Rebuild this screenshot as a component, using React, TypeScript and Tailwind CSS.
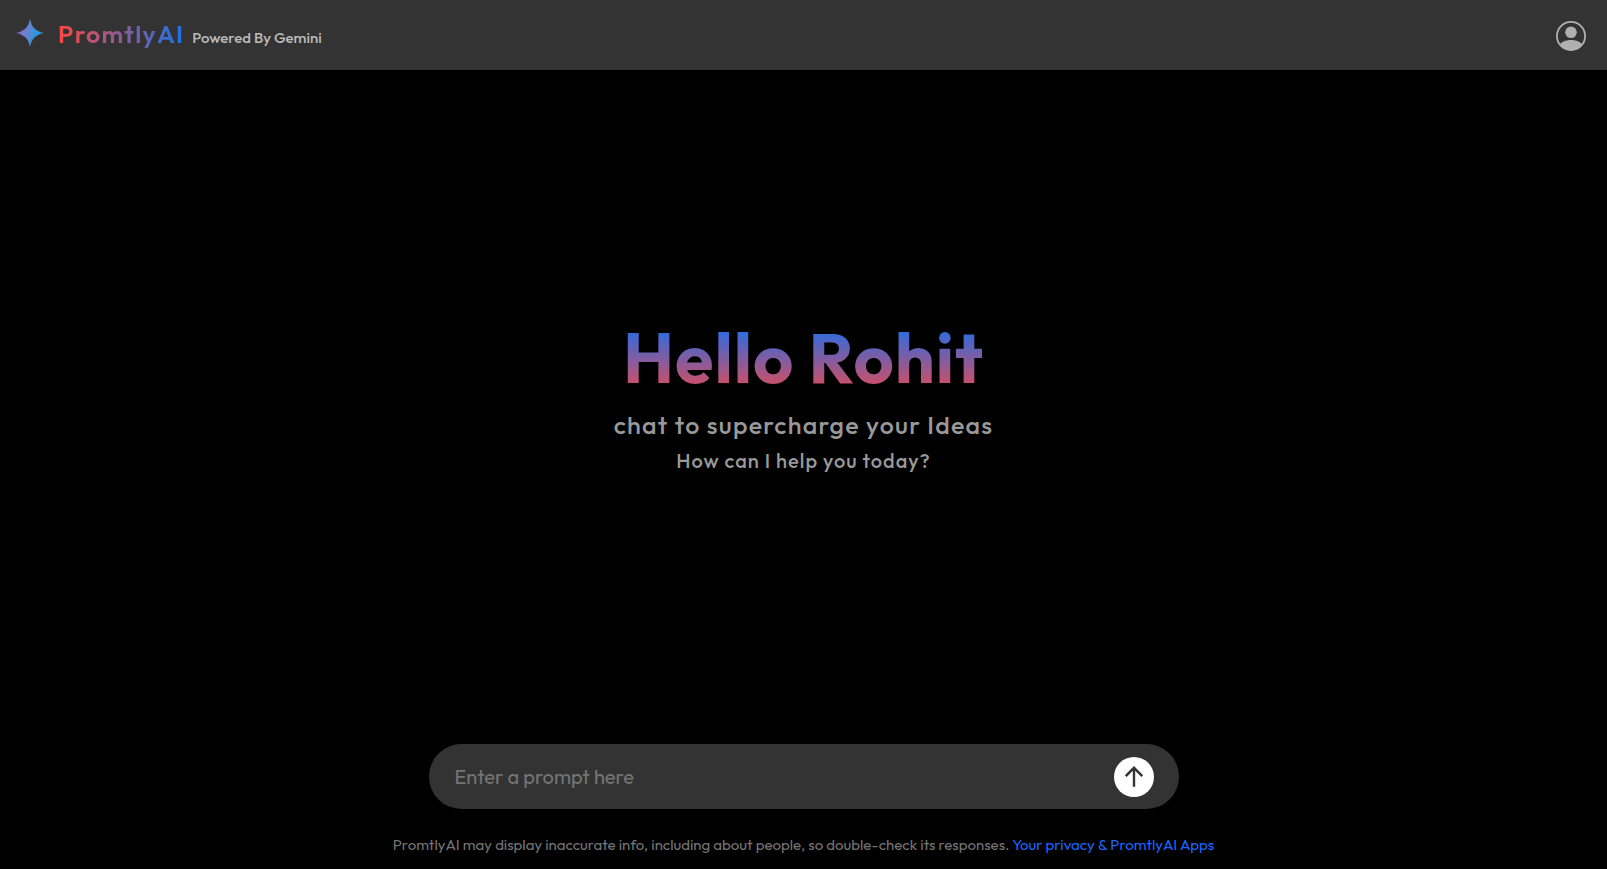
function Spark() {
  return (
    <svg viewBox="0 0 28 28" className="size-7" aria-hidden="true">
      <defs>
        <linearGradient id="spark" x1="0" y1="0.4" x2="1" y2="0.6">
          <stop offset="0" stopColor="#9168c0" />
          <stop offset="0.35" stopColor="#7080cf" />
          <stop offset="0.7" stopColor="#2f95dc" />
          <stop offset="1" stopColor="#1ba1e3" />
        </linearGradient>
      </defs>
      <path
        fill="url(#spark)"
        d="M14 0C15 5 16.6 7.6 18.5 9.5S23 13 28 14C23 15 20.4 16.6 18.5 18.5S15 23 14 28C13 23 11.4 20.4 9.5 18.5S5 15 0 14C5 13 7.600 11.400 9.500 9.500S13 5 14 0Z"
      />
    </svg>
  );
}

function Avatar() {
  return (
    <svg viewBox="0 0 30 30" className="size-[30px]" aria-hidden="true">
      <defs>
        <clipPath id="face">
          <circle cx="15" cy="15" r="14.5" />
        </clipPath>
      </defs>
      <circle cx="15" cy="15" r="14.1" fill="none" stroke="currentColor" strokeWidth="1.8" />
      <circle cx="15" cy="11.3" r="5.8" fill="currentColor" />
      <path
        clipPath="url(#face)"
        fill="currentColor"
        d="M3 24.5C5 21 9.5 18.9 15 18.9s10 2.1 12 5.6V30H3Z"
      />
    </svg>
  );
}

export default function App() {
  return (
    <div className="flex min-h-screen flex-col bg-black font-[Outfit,Lato,sans-serif] text-[#999]">
      <header className="flex h-[70px] items-center justify-between bg-[#333] pr-[21px] pl-4">
        <div className="flex items-center gap-3 pb-1">
          <Spark />
          <div className="flex items-baseline gap-2 pt-0.5 pl-0.5">
            <span className="bg-linear-to-r/srgb from-[#ff4641] to-[#1a73e8] bg-clip-text text-[25px] leading-9 font-semibold tracking-wider text-transparent">
              PromtlyAI
            </span>
            <span className="text-[15px] font-medium text-[#bbb]">Powered By Gemini</span>
          </div>
        </div>
        <button type="button" aria-label="Account" className="pt-0.5 text-[#b0b0b0]">
          <Avatar />
        </button>
      </header>

      <main className="flex flex-1 flex-col items-center justify-center pb-5 text-center">
        <h1 className="bg-linear-to-b/srgb from-[#1a6fef] from-10% to-[#ff4641] to-105% bg-clip-text text-[70px] leading-[84px] font-bold tracking-[1px] text-transparent">
          Hello Rohit
        </h1>
        <p className="mt-2 text-[25px] leading-9 font-medium tracking-wider">chat to supercharge your Ideas</p>
        <p className="text-xl leading-9 font-medium tracking-wider">How can I help you today?</p>
      </main>

      <footer className="flex flex-col items-center px-4 pb-3">
        <form
          className="flex h-[65px] w-full max-w-[750px] items-center rounded-full bg-[#333] pr-[25px] pl-[26px]"
          onSubmit={(e) => e.preventDefault()}
        >
          <input
            type="text"
            aria-label="Prompt"
            placeholder="Enter a prompt here"
            className="min-w-0 flex-1 bg-transparent text-xl text-white outline-none placeholder:text-[#757575]"
          />
          <button
            type="submit"
            aria-label="Send"
            className="flex size-10 items-center justify-center rounded-full bg-white text-[#333]"
          >
            <svg viewBox="0 0 20 22" className="h-[22px] w-5" fill="none" stroke="currentColor" strokeWidth="2.4" strokeLinecap="square" aria-hidden="true">
              <path d="M10 2.6V19.6M2.6 9.2 10 1.8l7.4 7.4" />
            </svg>
          </button>
        </form>
        <p className="mt-6 text-center text-[15px] leading-6 text-[#757575]">
          PromtlyAI may display inaccurate info, including about people, so double-check its responses.{" "}
          <a href="#privacy" className="text-[#1a66ff]">
            Your privacy &amp; PromtlyAI Apps
          </a>
        </p>
      </footer>
    </div>
  );
}
